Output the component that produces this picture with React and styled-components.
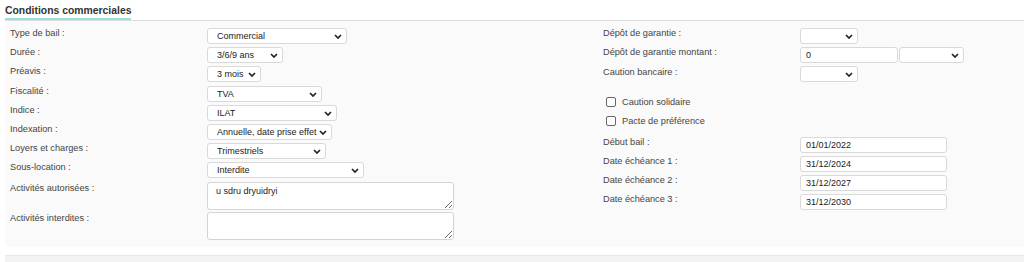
import React from 'react';
import styled, { createGlobalStyle } from 'styled-components';

const GlobalStyle = createGlobalStyle`
  body {
    margin: 0;
    background: #fff;
    font-family: "Liberation Sans", Arial, sans-serif;
  }
`;

const Section = styled.section`
  padding-left: 5px;
`;

const TitleBar = styled.div`
  display: flex;
  height: 20px;
  border-bottom: 1px solid #dcdcdc;
`;

const Title = styled.h3`
  margin: 0 0 -1px 0;
  padding-top: 5px;
  height: 13px;
  font-size: 10.4px;
  font-weight: bold;
  color: #333;
  border-bottom: 2px solid #98e0df;
  line-height: 12px;
`;

const Panel = styled.div`
  display: grid;
  grid-template-columns: 593px 1fr;
  background: #fafafa;
  border-radius: 0 0 0 5px;
  padding: 7px 0 6px 5px;
`;

const Column = styled.div`
  display: flex;
  flex-direction: column;
`;

const Row = styled.div`
  display: grid;
  grid-template-columns: 197px auto;
  align-items: start;
  height: ${p => p.$h || '19.2px'};
`;

const Label = styled.label`
  font-size: 9.2px;
  line-height: 10px;
  color: #444;
  padding-top: ${p => p.$top || '0'};
`;

const SelectWrap = styled.div`
  position: relative;
  width: ${p => p.$w}px;
  height: 16px;
`;

const NativeSelect = styled.select`
  appearance: none;
  -webkit-appearance: none;
  display: block;
  box-sizing: border-box;
  width: 100%;
  height: 16px;
  margin: 0;
  padding: 0 14px 0 9px;
  border: 1px solid #d9d9d9;
  border-radius: 3px;
  background: #fff;
  font-family: "Liberation Sans", Arial, sans-serif;
  font-size: 9px;
  color: #222;
  outline: none;
`;

const Chevron = styled.svg`
  position: absolute;
  right: 5px;
  top: 6px;
  pointer-events: none;
`;

const Input = styled.input`
  display: block;
  box-sizing: border-box;
  width: ${p => p.$w}px;
  height: 16px;
  margin: 0;
  padding: 0 5px;
  border: 1px solid #d9d9d9;
  border-radius: 3px;
  background: #fff;
  font-family: "Liberation Sans", Arial, sans-serif;
  font-size: 9px;
  color: #222;
  outline: none;
`;

const Pair = styled.div`
  display: flex;
  gap: 1px;
`;

const TextArea = styled.textarea`
  display: block;
  box-sizing: border-box;
  width: 247px;
  height: 28px;
  margin: 0;
  padding: 3px 8px;
  border: 1px solid #d4d4d4;
  border-radius: 3px;
  background: #fff;
  font-family: "Liberation Sans", Arial, sans-serif;
  font-size: 9px;
  color: #222;
  outline: none;
`;

const CheckGroup = styled.div`
  display: flex;
  flex-direction: column;
  margin: 7px 0 6px 3px;
`;

const CheckRow = styled.label`
  display: flex;
  align-items: center;
  gap: 6px;
  height: 19px;
  font-size: 9.2px;
  color: #444;
`;

const Box = styled.input`
  appearance: none;
  -webkit-appearance: none;
  width: 10px;
  height: 10px;
  margin: 0;
  border: 1px solid #666;
  border-radius: 2px;
  background: #fff;
`;

const Footer = styled.div`
  margin-top: 8px;
  height: 8px;
  background: #f3f3f3;
  border-top: 1px solid #e8e8e8;
`;

const Select = ({ w, value }) => (
  <SelectWrap $w={w}>
    <NativeSelect defaultValue={value}>
      <option value={value}>{value}</option>
    </NativeSelect>
    <Chevron width="8" height="5" viewBox="0 0 8 5">
      <path d="M1 1 L4 4 L7 1" fill="none" stroke="#222" strokeWidth="1.7" />
    </Chevron>
  </SelectWrap>
);

const leftSelects = [
  ['Type de bail :', 140, 'Commercial'],
  ['Durée :', 76, '3/6/9 ans'],
  ['Préavis :', 54, '3 mois'],
  ['Fiscalité :', 115, 'TVA'],
  ['Indice :', 130, 'ILAT'],
  ['Indexation :', 125, 'Annuelle, date prise effet'],
  ['Loyers et charges :', 119, 'Trimestriels'],
  ['Sous-location :', 157, 'Interdite'],
];

const dates = [
  ['Début bail :', '01/01/2022'],
  ['Date échéance 1 :', '31/12/2024'],
  ['Date échéance 2 :', '31/12/2027'],
  ['Date échéance 3 :', '31/12/2030'],
];

export default function App() {
  return (
    <Section>
      <GlobalStyle />
      <TitleBar>
        <Title>Conditions commerciales</Title>
      </TitleBar>
      <Panel>
        <Column>
          {leftSelects.map(([label, w, value]) => (
            <Row key={label}>
              <Label>{label}</Label>
              <Select w={w} value={value} />
            </Row>
          ))}
          <Row $h="30.5px">
            <Label $top="1px">Activités autorisées :</Label>
            <TextArea defaultValue="u sdru dryuidryi" />
          </Row>
          <Row $h="29px">
            <Label $top="1px">Activités interdites :</Label>
            <TextArea defaultValue="" />
          </Row>
        </Column>
        <Column>
          <Row>
            <Label>Dépôt de garantie :</Label>
            <Select w={58} value="" />
          </Row>
          <Row>
            <Label>Dépôt de garantie montant :</Label>
            <Pair>
              <Input $w={98} defaultValue="0" />
              <Select w={65} value="" />
            </Pair>
          </Row>
          <Row>
            <Label $top="1px">Caution bancaire :</Label>
            <Select w={58} value="" />
          </Row>
          <CheckGroup>
            <CheckRow><Box type="checkbox" />Caution solidaire</CheckRow>
            <CheckRow><Box type="checkbox" />Pacte de préférence</CheckRow>
          </CheckGroup>
          {dates.map(([label, value]) => (
            <Row key={label}>
              <Label>{label}</Label>
              <Input $w={147} defaultValue={value} />
            </Row>
          ))}
        </Column>
      </Panel>
      <Footer />
    </Section>
  );
}
